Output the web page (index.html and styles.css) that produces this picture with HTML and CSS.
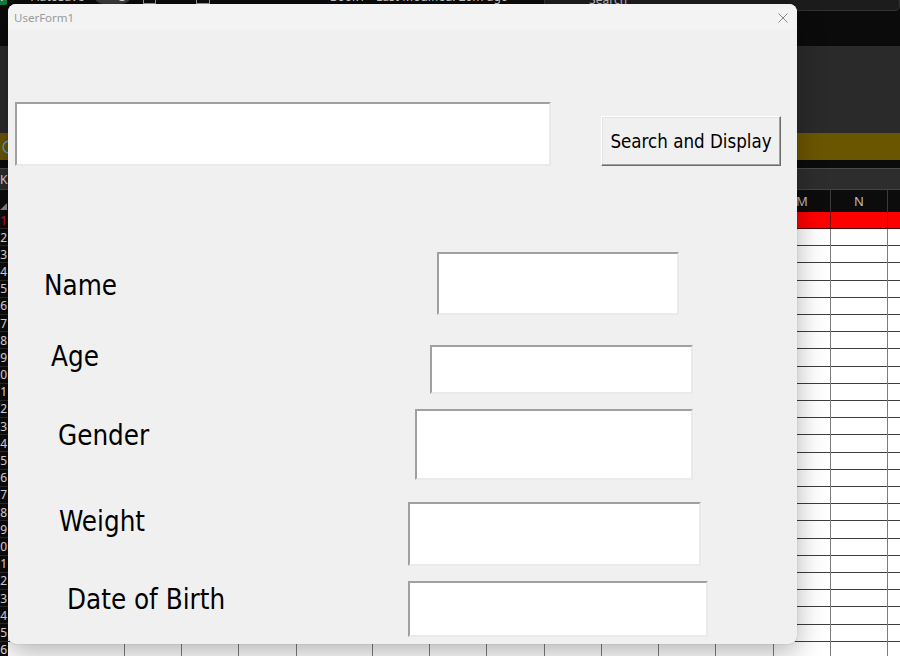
FILE: index.html
```html
<!DOCTYPE html>
<html>
<head>
<meta charset="utf-8">
<title>UserForm1</title>
<link rel="stylesheet" href="styles.css">
</head>
<body>
<div class="excel">
  <div class="topbar">
    <span class="xl-icon">X</span>
    <span class="tb-text autosave">AutoSave</span>
    <span class="toggle"><span class="toggle-txt">Off</span><span class="knob"></span></span>
    <span class="tb-ico i1"></span>
    <span class="tb-ico i2"></span>
    <span class="tb-text doc">Book1 • Last Modified: 20m ago</span>
    <div class="search"><span class="search-txt">Search</span></div>
  </div>
  <div class="ribbon"></div>
  <div class="msgbar">
    <svg class="info" width="14" height="14" viewBox="0 0 14 14"><circle cx="7" cy="7" r="6" fill="none" stroke="#4aa3df" stroke-width="1.5"/></svg>
  </div>
  <div class="gap"></div>
  <div class="formula"><span class="namebox">K2</span></div>
  <div class="sheet">
    <div class="rowhdr">
      <div class="corner"><span class="tri"></span></div>
      <div class="rn first">1</div>
      <div class="rn">2</div><div class="rn">3</div><div class="rn">4</div><div class="rn">5</div>
      <div class="rn">6</div><div class="rn">7</div><div class="rn">8</div><div class="rn">9</div>
      <div class="rn">10</div><div class="rn">11</div><div class="rn">12</div><div class="rn">13</div>
      <div class="rn">14</div><div class="rn">15</div><div class="rn">16</div><div class="rn">17</div>
      <div class="rn">18</div><div class="rn">19</div><div class="rn">20</div><div class="rn">21</div>
      <div class="rn">22</div><div class="rn">23</div><div class="rn">24</div><div class="rn">25</div>
      <div class="rn">26</div>
    </div>
    <div class="col w117"><div class="ch">A</div><div class="rc"></div><div class="cells"></div></div>
    <div class="col w57"><div class="ch">B</div><div class="rc"></div><div class="cells"></div></div>
    <div class="col w57"><div class="ch">C</div><div class="rc"></div><div class="cells"></div></div>
    <div class="col w58"><div class="ch">D</div><div class="rc"></div><div class="cells"></div></div>
    <div class="col w76"><div class="ch">E</div><div class="rc"></div><div class="cells"></div></div>
    <div class="col w57"><div class="ch">F</div><div class="rc"></div><div class="cells"></div></div>
    <div class="col w57"><div class="ch">G</div><div class="rc"></div><div class="cells"></div></div>
    <div class="col w58"><div class="ch">H</div><div class="rc"></div><div class="cells"></div></div>
    <div class="col w57"><div class="ch">I</div><div class="rc"></div><div class="cells"></div></div>
    <div class="col w57"><div class="ch">J</div><div class="rc"></div><div class="cells"></div></div>
    <div class="col w57"><div class="ch">K</div><div class="rc"></div><div class="cells"></div></div>
    <div class="col w58"><div class="ch">L</div><div class="rc"></div><div class="cells"></div></div>
    <div class="col w57"><div class="ch">M</div><div class="rc"></div><div class="cells"></div></div>
    <div class="col w57"><div class="ch">N</div><div class="rc"></div><div class="cells"></div></div>
    <div class="col w57"><div class="ch">O</div><div class="rc"></div><div class="cells"></div></div>
  </div>
</div>

<div class="dialog">
  <div class="titlebar">
    <span class="title">UserForm1</span>
    <svg class="close" width="10" height="10" viewBox="0 0 10 10"><path d="M0.5 0.5 L9.5 9.5 M9.5 0.5 L0.5 9.5" stroke="#8c8c8c" stroke-width="1" fill="none"/></svg>
  </div>
  <div class="form">
    <div class="row-search">
      <input class="tb search-box" type="text">
      <button class="btn" type="button">Search and Display</button>
    </div>
    <div class="field f-name">
      <label class="lbl">Name</label>
      <input class="tb" type="text">
    </div>
    <div class="field f-age">
      <label class="lbl">Age</label>
      <input class="tb" type="text">
    </div>
    <div class="field f-gender">
      <label class="lbl">Gender</label>
      <input class="tb" type="text">
    </div>
    <div class="field f-weight">
      <label class="lbl">Weight</label>
      <input class="tb" type="text">
    </div>
    <div class="field f-dob">
      <label class="lbl">Date of Birth</label>
      <input class="tb" type="text">
    </div>
  </div>
</div>
</body>
</html>
```
FILE: styles.css
```css
html, body {
  margin: 0;
  padding: 0;
}
body {
  width: 900px;
  height: 656px;
  overflow: hidden;
  position: relative;
  background: #0a0a0a;
  font-family: "DejaVu Sans Condensed", "DejaVu Sans", sans-serif;
}

/* ---------- Excel background ---------- */
.excel {
  display: flex;
  flex-direction: column;
  height: 656px;
}
.topbar {
  height: 46px;
  flex: none;
  background: #0b0b0b;
  display: flex;
  align-items: flex-start;
  overflow: hidden;
  font-family: "Noto Sans", sans-serif;
}
.xl-icon {
  width: 16px;
  height: 16px;
  margin-top: -11px;
  margin-left: -8px;
  background: #107c41;
  color: #fff;
  font-size: 10px;
  line-height: 16px;
  text-align: center;
  border-radius: 2px;
}
.tb-text {
  color: #c8c8c8;
  font-size: 12px;
  line-height: 14px;
  margin-top: -10px;
  white-space: nowrap;
}
.autosave { margin-left: 24px; }
.toggle {
  margin-left: 10px;
  margin-top: -14px;
  width: 38px;
  height: 18px;
  border-radius: 9px;
  background: #3a3a3a;
  display: flex;
  align-items: center;
  justify-content: space-between;
  padding: 0 3px;
  box-sizing: border-box;
}
.toggle-txt { color: #ddd; font-size: 10px; }
.knob { width: 12px; height: 12px; border-radius: 50%; background: #e8e8e8; }
.tb-ico {
  width: 14px;
  height: 14px;
  margin-top: -10px;
  border: 1px solid #9a9a9a;
  box-sizing: border-box;
}
.i1 { margin-left: 12px; }
.i2 { margin-left: 40px; }
.doc { margin-left: 120px; }
.search {
  margin-left: 36px;
  margin-top: -8px;
  width: 370px;
  height: 19px;
  background: #1c1c1c;
  border: 1px solid #333;
  border-radius: 5px;
  box-sizing: border-box;
  padding-left: 44px;
  color: #bdbdbd;
  font-size: 12px;
  line-height: 14px;
}
.ribbon {
  height: 87px;
  flex: none;
  background: #2a2a2a;
}
.msgbar {
  height: 27px;
  flex: none;
  background: #6b5600;
  display: flex;
  align-items: center;
}
.info { margin-left: 2px; }
.gap {
  height: 8px;
  flex: none;
  background: #0b0b0b;
}
.formula {
  height: 22px;
  flex: none;
  box-sizing: border-box;
  background: #2d2d2d;
  border-top: 1px solid #4b4b4b;
  border-bottom: 1px solid #444;
  display: flex;
  align-items: center;
  color: #d8d8d8;
  font-size: 12px;
  font-family: "Noto Sans", sans-serif;
}
.sheet {
  flex: 1;
  display: flex;
  overflow: hidden;
}
.rowhdr {
  width: 8px;
  flex: none;
  display: flex;
  flex-direction: column;
  background: #0c0c0c;
}
.corner {
  height: 22px;
  flex: none;
  display: flex;
  align-items: flex-end;
  justify-content: flex-end;
  padding: 0 1px 2px 0;
  box-sizing: border-box;
}
.tri {
  width: 0;
  height: 0;
  border-left: 7px solid transparent;
  border-bottom: 7px solid #8a8a8a;
}
.rn {
  height: 17.2px;
  flex: none;
  box-sizing: border-box;
  border-bottom: 1px solid #2c2c2c;
  display: flex;
  justify-content: flex-end;
  align-items: center;
  color: #e4e4e4;
  font-family: "Noto Sans", sans-serif;
  font-size: 12px;
  white-space: nowrap;
  padding-right: 1px;
}
.rn.first {
  height: 17px;
  color: #c81e1e;
}
.col {
  flex: none;
  display: flex;
  flex-direction: column;
}
.w117 { width: 117px; }
.w57 { width: 57px; }
.w58 { width: 58px; }
.w76 { width: 76px; }
.ch {
  height: 22px;
  flex: none;
  box-sizing: border-box;
  background: #0c0c0c;
  border-right: 1px solid #3a3a3a;
  color: #bdbdbd;
  font-family: "Noto Sans", sans-serif;
  font-size: 13px;
  display: flex;
  align-items: center;
  justify-content: center;
}
.rc {
  height: 17px;
  flex: none;
  box-sizing: border-box;
  background: #ff0000;
  border-right: 1px solid #6a0a0a;
  border-bottom: 1px solid #4a0000;
}
.cells {
  flex: 1;
  box-sizing: border-box;
  border-right: 1px solid #7d7d7d;
  background: repeating-linear-gradient(to bottom, #ffffff 0, #ffffff 16.2px, #3d3d3d 16.2px, #3d3d3d 17.2px);
}

/* ---------- UserForm dialog ---------- */
.dialog {
  position: absolute;
  left: 8px;
  top: 4px;
  width: 789px;
  height: 640px;
  border-radius: 8px;
  background: #f0f0f0;
  box-shadow: 0 8px 28px rgba(0, 0, 0, 0.3), 0 0 1px rgba(0, 0, 0, 0.35);
  overflow: hidden;
}
.titlebar {
  height: 26px;
  background: #f3f3f3;
  display: flex;
  align-items: center;
  justify-content: space-between;
  padding: 0 9px 0 6px;
  box-sizing: border-box;
}
.title {
  font-family: "Noto Sans", sans-serif;
  font-size: 11.5px;
  color: #9a9a9a;
  padding-top: 1px;
}
.close { display: block; margin-top: 1px; }

.form {
  display: flex;
  flex-direction: column;
  align-items: flex-start;
}
.tb {
  display: block;
  flex: none;
  margin: 0;
  padding: 0;
  box-sizing: border-box;
  background: #ffffff;
  border-style: solid;
  border-width: 2px;
  border-color: #a0a0a0 #eaeaea #eaeaea #a0a0a0;
  outline: none;
  font: inherit;
}
.row-search {
  margin-top: 72px;
  display: flex;
  align-items: flex-end;
}
.search-box {
  margin-left: 7px;
  width: 536px;
  height: 64px;
}
.btn {
  margin: 0 0 0 50px;
  padding: 0;
  width: 180px;
  height: 50px;
  box-sizing: border-box;
  background: #f0f0f0;
  border: 1px solid;
  border-color: #ffffff #6e6e6e #6e6e6e #ffffff;
  box-shadow: inset -1px -1px 0 #a0a0a0, inset 1px 1px 0 #e3e3e3;
  font-family: "DejaVu Sans Condensed", "DejaVu Sans", sans-serif;
  font-size: 18.6px;
  color: #000;
  text-align: center;
}
.field {
  display: flex;
  align-items: flex-start;
}
.lbl {
  flex: none;
  font-size: 27.5px;
  line-height: 1;
  color: #000;
  white-space: nowrap;
}
.f-name { margin-top: 86px; }
.f-name .lbl { margin-left: 36px; width: 393px; margin-top: 20px; }
.f-name .tb { width: 242px; height: 63px; }

.f-age { margin-top: 28px; }
.f-age .lbl { margin-left: 43px; width: 379px; }
.f-age .tb { width: 263px; height: 49px; margin-top: 2px; }

.f-gender { margin-top: 15px; }
.f-gender .lbl { margin-left: 50px; width: 357px; margin-top: 13px; }
.f-gender .tb { width: 278px; height: 71px; }

.f-weight { margin-top: 22px; }
.f-weight .lbl { margin-left: 51px; width: 349px; margin-top: 6px; }
.f-weight .tb { width: 293px; height: 64px; }

.f-dob { margin-top: 15px; }
.f-dob .lbl { margin-left: 59px; width: 341px; margin-top: 5px; }
.f-dob .tb { width: 300px; height: 56px; }
```
